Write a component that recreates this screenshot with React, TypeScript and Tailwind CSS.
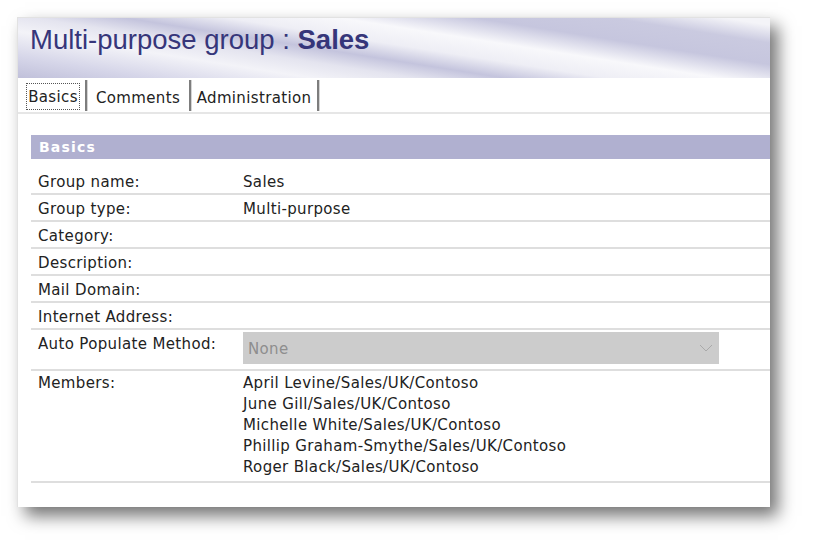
const members = [
  'April Levine/Sales/UK/Contoso',
  'June Gill/Sales/UK/Contoso',
  'Michelle White/Sales/UK/Contoso',
  'Phillip Graham-Smythe/Sales/UK/Contoso',
  'Roger Black/Sales/UK/Contoso',
];

const fields: { label: string; value?: string }[] = [
  { label: 'Group name:', value: 'Sales' },
  { label: 'Group type:', value: 'Multi-purpose' },
  { label: 'Category:' },
  { label: 'Description:' },
  { label: 'Mail Domain:' },
  { label: 'Internet Address:' },
];

function Tab({ label, width, active }: { label: string; width: string; active?: boolean }) {
  return (
    <div className="flex items-stretch">
      <div className={`${width} flex items-end justify-center pb-[1px]`}>
        <span
          className={
            active
              ? 'border border-dotted border-[#555] px-[1px] pt-[2px] leading-[23px]'
              : 'pt-[2px] leading-[23px]'
          }
        >
          {label}
        </span>
      </div>
      <div className="w-[2px] bg-[#7d7d7d] shadow-[1px_0_0_#d4d4d4]" />
    </div>
  );
}

export default function App() {
  return (
    <div className="min-h-screen bg-white pl-[17px] pt-[17px] font-['DejaVu_Sans',sans-serif] text-[15px] tracking-[0.35px] text-[#222]">
      <div className="w-[753px] h-[490px] bg-white border-t border-l border-[#e2e2e2] shadow-[8px_9px_16px_rgba(0,0,0,0.55)] flex flex-col">
        {/* title band */}
        <div className="h-[60px] pl-[12px] pt-[6px] bg-[linear-gradient(9deg,#c0c0da_0%,#d6d6e9_12%,#f3f3f8_26%,#e4e4ef_35%,#c4c4dd_43%,#eeeef5_52%,#f8f8fb_62%,#c6c6de_74%,#cacae0_86%,#f4f4f8_96%)]">
          <h1 className="font-['Liberation_Sans',Arial,sans-serif] text-[27.5px] leading-[32px] tracking-normal text-[#36367a]">
            Multi-purpose group : <span className="font-bold">Sales</span>
          </h1>
        </div>

        {/* tabs */}
        <div className="flex pl-[3px] pt-[2px] h-[36px] border-b-2 border-[#e6e6e6]">
          <div className="flex h-[31px]">
            <Tab label="Basics" width="w-[64px]" active />
            <Tab label="Comments" width="w-[102px]" />
            <Tab label="Administration" width="w-[126px]" />
          </div>
        </div>

        {/* form */}
        <div className="pl-[13px] pt-[21px]">
          <div className="h-[24px] bg-[#b0b0d0] pl-[8px] font-bold text-[14px] leading-[24px] tracking-[1.2px] text-white">
            Basics
          </div>

          <div className="mt-[9px]">
            {fields.map((f) => (
              <div key={f.label} className="flex pl-[7px] pt-[4px] pb-[1px] leading-[20px] border-b-2 border-[#dedede]">
                <div className="w-[205px]">{f.label}</div>
                <div>{f.value}</div>
              </div>
            ))}

            <div className="flex pl-[7px] pt-[2px] pb-[5px] border-b-2 border-[#dedede]">
              <div className="w-[205px] pt-[2px] leading-[20px]">Auto Populate Method:</div>
              <div className="w-[476px] h-[32px] bg-[#cccccc] flex items-center justify-between pl-[5px] pr-[6px] text-[#8e8e8e]">
                <span className="pt-[3px]">None</span>
                <svg width="14" height="8" viewBox="0 0 14 8" fill="none">
                  <polyline points="1,1 7,7 13,1" stroke="#a9a9a9" strokeWidth="1" />
                </svg>
              </div>
            </div>

            <div className="flex pl-[7px] pt-[2px] pb-[3px] leading-[21px] border-b-2 border-[#dedede]">
              <div className="w-[205px]">Members:</div>
              <div className="flex flex-col">
                {members.map((m) => (
                  <span key={m}>{m}</span>
                ))}
              </div>
            </div>
          </div>
        </div>
      </div>
    </div>
  );
}
